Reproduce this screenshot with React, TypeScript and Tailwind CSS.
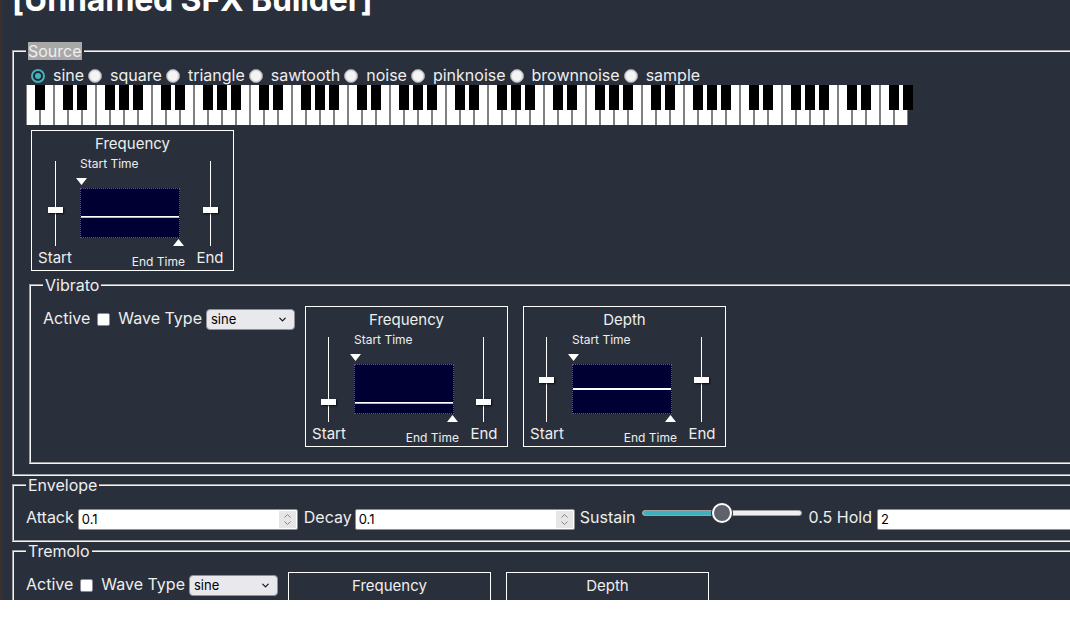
import React from "react";
import { ChevronDown } from "lucide-react";

const TEXT = "text-[#eeeeee]";

function Piano() {
  const whites: number[] = [];
  const blacks: number[] = [];
  let wc = 0;
  for (let m = 21; m <= 128; m++) {
    const n = m % 12;
    if ([1, 3, 6, 8, 10].includes(n)) blacks.push(wc);
    else {
      whites.push(m);
      wc++;
    }
  }
  return (
    <div className="relative flex h-[40px] w-[882px]">
      {whites.map((m) => (
        <div key={m} className="h-full w-[14px] shrink-0 border-x border-[#808080] bg-white" />
      ))}
      {blacks.map((b) => (
        <div key={b} className="absolute top-0 h-[25px] w-[10px] bg-black" style={{ left: b * 14 - 5 }} />
      ))}
    </div>
  );
}

function VSlider({ label, thumb, w }: { label: string; thumb: number; w: string }) {
  return (
    <div className={`flex shrink-0 flex-col items-center ${w}`}>
      <div className="relative mt-[8px] flex h-[85px] w-[15px] justify-center">
        <div className="h-full w-px bg-white" />
        <div
          className="absolute left-0 h-[6px] w-[15px] bg-white shadow-[1px_1px_2px_rgba(0,0,0,0.8)]"
          style={{ top: thumb }}
        />
      </div>
      <div className="mt-[3px] whitespace-nowrap text-[15px] leading-[18px]">{label}</div>
    </div>
  );
}

function Panel({
  title,
  thumb,
  lineY,
  double,
  className = "",
}: {
  title: string;
  thumb: number;
  lineY: number;
  double?: boolean;
  className?: string;
}) {
  return (
    <div className={`h-[141px] w-[203px] shrink-0 border border-white pt-[4px] ${className}`}>
      <div className="text-center text-[15px] leading-[18px]">{title}</div>
      <div className="flex pl-[6px]">
        <VSlider label="Start" thumb={thumb} w="w-[34px]" />
        <div className="ml-[8px] flex w-[106px] shrink-0 flex-col">
          <div className="mt-[4px] whitespace-nowrap text-[12px] leading-[14px]">Start Time</div>
          <svg width="11" height="7" className="-ml-[4px] mt-[7px] block">
            <polygon points="0,0 11,0 5.5,7" fill="#ffffff" />
          </svg>
          <div className="mt-[3px] h-[50px] w-[100px] border border-dotted border-[#5b5b86] bg-[#000033]">
            <svg width="98" height="48" className="block">
              {double ? (
                <>
                  <rect x="0" y={lineY} width="98" height="1" fill="#ffffff" />
                  <rect x="0" y={lineY + 1} width="98" height="1" fill="#b4b4e0" />
                </>
              ) : (
                <rect x="0" y={lineY} width="98" height="2" fill="#ffffff" />
              )}
            </svg>
          </div>
          <svg width="11" height="7" className="ml-[93px] mt-[1px] block">
            <polygon points="0,7 11,7 5.5,0" fill="#ffffff" />
          </svg>
          <div className="mt-[9px] whitespace-nowrap pr-[1px] text-right text-[12px] leading-[14px]">End Time</div>
        </div>
        <div className="ml-[11px]">
          <VSlider label="End" thumb={thumb} w="w-[26px]" />
        </div>
      </div>
    </div>
  );
}

function Legend({ children, selected }: { children: React.ReactNode; selected?: boolean }) {
  return (
    <legend className="px-[2px] text-[16px] leading-[18px]">
      <span className={`inline-block leading-[18px] ${selected ? "bg-[#a8a8a8]" : ""}`}>{children}</span>
    </legend>
  );
}

const FS = "[border:2px_groove_#f4f4f4] px-[12px] pt-[6px] pb-[10px] min-w-0";

function Checkbox({ className = "" }: { className?: string }) {
  return <div className={`h-[13px] w-[13px] shrink-0 rounded-[2px] border border-[#8a8a99] bg-white ${className}`} />;
}

function Select({ className = "" }: { className?: string }) {
  return (
    <div
      className={`flex h-[21px] w-[89px] shrink-0 items-center justify-between rounded-[4px] border border-[#8f8f9d] bg-[#e9e9ed] pl-[4px] pr-[6px] text-[13px] text-black ${className}`}
    >
      <span className="leading-[15px]">sine</span>
      <ChevronDown size={11} strokeWidth={2.6} color="#111" />
    </div>
  );
}

function WaveRow() {
  return (
    <>
      <span className="mt-[9px] shrink-0 leading-[19px]">Active</span>
      <Checkbox className="ml-[7px] mt-[13px]" />
      <span className="ml-[8px] mt-[9px] shrink-0 whitespace-nowrap leading-[19px]">Wave Type</span>
      <Select className="ml-[4px] mt-[9px]" />
    </>
  );
}

function NumInput({ value, spinner = true, className = "" }: { value: string; spinner?: boolean; className?: string }) {
  return (
    <div
      className={`flex h-[21px] w-[220px] shrink-0 items-center justify-between rounded-[2px] border border-[#8f8f8f] bg-white pl-[3px] pr-[1px] text-[13px] text-black ${className}`}
    >
      <span className="leading-[15px]">{value}</span>
      {spinner && (
        <svg width="17" height="17" className="block">
          <rect x="0" y="0" width="17" height="17" fill="#e6e6e6" />
          <polyline points="5.5,6.5 8.5,3.5 11.5,6.5" fill="none" stroke="#858585" strokeWidth="1" />
          <polyline points="5.5,10.5 8.5,13.5 11.5,10.5" fill="none" stroke="#858585" strokeWidth="1" />
        </svg>
      )}
    </div>
  );
}

function Range() {
  return (
    <div className="relative ml-[6px] mt-[3px] flex h-[20px] w-[160px] shrink-0 items-center">
      <div className="flex h-[6px] w-full overflow-hidden rounded-full border border-[#a0a0a0] bg-[#efefef]">
        <div className="h-full w-[80px] bg-[#3fb0bd]" />
      </div>
      <div className="absolute left-[70px] top-0 h-[20px] w-[20px] rounded-full border-2 border-white bg-[#5e626c] shadow-[0_0_0_1px_#30343c]" />
    </div>
  );
}

function Radio({ label, checked }: { label: string; checked?: boolean }) {
  return (
    <div className="flex items-start">
      {checked ? (
        <div className="mt-[3px] flex h-[14px] w-[14px] items-center justify-center rounded-full border-2 border-[#48b0bd] bg-[#1f2733]">
          <div className="h-[6px] w-[6px] rounded-full bg-[#48b0bd]" />
        </div>
      ) : (
        <div className="mt-[3px] h-[14px] w-[14px] rounded-full border border-[#9c9ca6] bg-[#f4f4f4] shadow-[inset_0_0_0_1px_#d8d8d8]" />
      )}
      <span className="ml-[8px] mr-[4px] whitespace-nowrap leading-[19px]">{label}</span>
    </div>
  );
}

export default function App() {
  const radios = ["sine", "square", "triangle", "sawtooth", "noise", "pinknoise", "brownnoise", "sample"];
  return (
    <div className="h-[617px] w-[1070px] overflow-hidden bg-white font-[Inter,sans-serif]">
      <div className={`flex h-[600px] overflow-hidden bg-[#29303b] text-[16px] ${TEXT}`}>
        <div className="w-[2px] shrink-0 bg-[#3a3029]" />
        <div className="w-[1112px] shrink-0 pl-[10px]">
          <h1 className="-mt-[19px] mb-[23px] whitespace-nowrap text-[32px] font-bold leading-[38px] tracking-[-0.15px] text-white">
            [Unnamed SFX Builder]
          </h1>

          <fieldset className={FS}>
            <Legend selected>Source</Legend>
            <div className="flex h-[19px] pl-[5px]">
              {radios.map((r, i) => (
                <Radio key={r} label={r} checked={i === 0} />
              ))}
            </div>
            <Piano />
            <Panel title="Frequency" thumb={46} lineY={27} double className="ml-[5px] mt-[5px] mb-[5px]" />

            <fieldset className={`${FS} ml-[3px]`}>
              <Legend>Vibrato</Legend>
              <div className="flex items-start">
                <WaveRow />
                <Panel title="Frequency" thumb={62} lineY={37} double className="ml-[10px] mt-[6px] mb-[5px]" />
                <Panel title="Depth" thumb={40} lineY={23} className="ml-[15px] mt-[6px] mb-[5px]" />
              </div>
            </fieldset>
          </fieldset>

          <fieldset className={FS}>
            <Legend>Envelope</Legend>
            <div className="flex h-[30px] items-start">
              <span className="mt-[8px] leading-[19px]">Attack</span>
              <NumInput value="0.1" className="ml-[4px] mt-[9px]" />
              <span className="ml-[6px] mt-[8px] leading-[19px]">Decay</span>
              <NumInput value="0.1" className="ml-[3px] mt-[9px]" />
              <span className="ml-[5px] mt-[8px] leading-[19px]">Sustain</span>
              <Range />
              <span className="ml-[7px] mt-[8px] whitespace-nowrap leading-[19px]">0.5 Hold</span>
              <NumInput value="2" spinner={false} className="ml-[5px] mt-[9px]" />
            </div>
          </fieldset>

          <fieldset className={FS}>
            <Legend>Tremolo</Legend>
            <div className="flex items-start">
              <WaveRow />
              <Panel title="Frequency" thumb={46} lineY={23} className="ml-[10px] mt-[6px] mb-[5px]" />
              <Panel title="Depth" thumb={40} lineY={23} className="ml-[15px] mt-[6px] mb-[5px]" />
            </div>
          </fieldset>
        </div>
      </div>
    </div>
  );
}
